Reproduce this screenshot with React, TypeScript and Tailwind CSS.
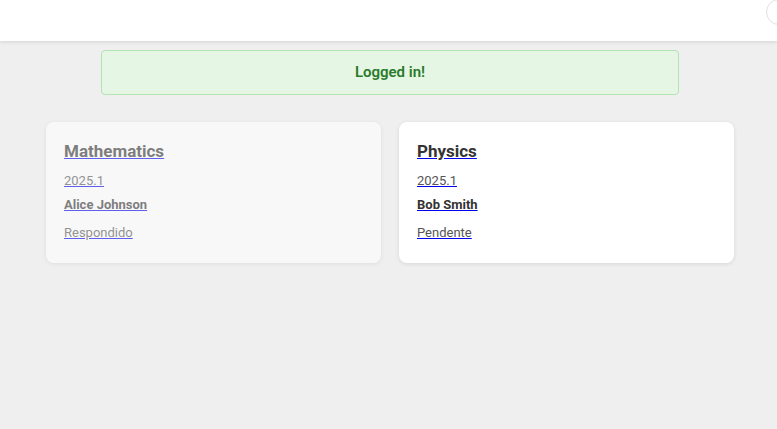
import React from "react";

type Item = {
  subject: string;
  term: string;
  teacher: string;
  status: string;
  done: boolean;
};

const items: Item[] = [
  { subject: "Mathematics", term: "2025.1", teacher: "Alice Johnson", status: "Respondido", done: true },
  { subject: "Physics", term: "2025.1", teacher: "Bob Smith", status: "Pendente", done: false },
];

const Card = ({ item }: { item: Item }) => (
  <a
    href="#"
    className={
      "block bg-white rounded-lg shadow-[0_1px_4px_rgba(0,0,0,0.1)] px-[18px] pt-[17px] pb-[21px] underline decoration-[#0000ee] " +
      (item.done ? "opacity-60" : "")
    }
  >
    <h2 className="text-[17px] leading-[24px] font-bold text-[#333]">{item.subject}</h2>
    <p className="mt-[9px] text-[13px] leading-[18px] text-[#555]">{item.term}</p>
    <p className="mt-[6px] text-[13px] leading-[18px] font-bold text-[#333]">{item.teacher}</p>
    <p className="mt-[10px] text-[13px] leading-[18px] text-[#555]">{item.status}</p>
  </a>
);

export default function App() {
  return (
    <div className="min-h-[429px] bg-[#efefef] font-['Roboto',sans-serif]">
      <header className="h-[41px] bg-white shadow-[0_1px_4px_rgba(0,0,0,0.12)] flex justify-end overflow-hidden relative z-10">
        <div className="w-[26px] h-[26px] mt-[-1px] mr-[-15px] rounded-full border border-[#e0e0e0] bg-white shrink-0" />
      </header>
      <main className="pl-[46px]">
        <div className="ml-[55px] w-[578px] mt-[9px] h-[45px] flex items-center justify-center rounded-[4px] bg-[#e5f7e4] border border-[#b3e2b3] text-[#2a7a2a] text-[15px] font-semibold">
          Logged in!
        </div>
        <div className="mt-[27px] grid grid-cols-[335px_335px] gap-[18px]">
          {items.map((it) => (
            <Card key={it.subject} item={it} />
          ))}
        </div>
      </main>
    </div>
  );
}
